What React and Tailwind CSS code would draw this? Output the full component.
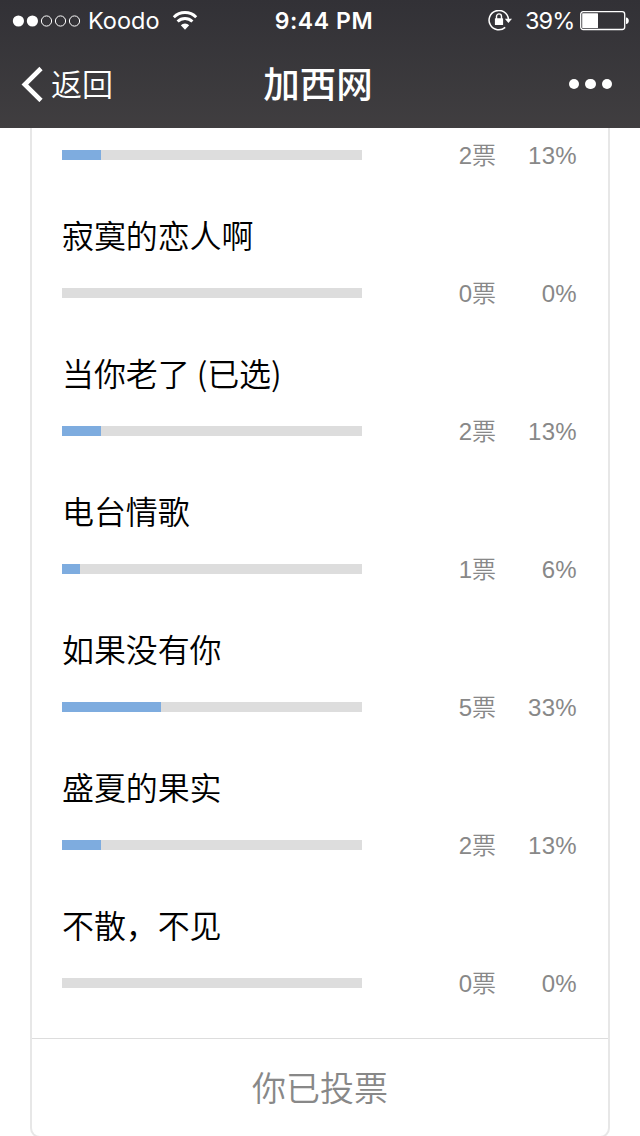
const options = [
  { votes: 2, percent: 13 },
  { title: "寂寞的恋人啊", votes: 0, percent: 0 },
  { title: "当你老了 (已选)", votes: 2, percent: 13 },
  { title: "电台情歌", votes: 1, percent: 6 },
  { title: "如果没有你", votes: 5, percent: 33 },
  { title: "盛夏的果实", votes: 2, percent: 13 },
  { title: "不散，不见", votes: 0, percent: 0 },
];

function SignalDots() {
  return (
    <svg width="70" height="14" viewBox="0 0 70 14" fill="none" stroke="white">
      <circle cx="6.4" cy="7" r="5.6" fill="white" stroke="none" />
      <circle cx="20.4" cy="7" r="5.6" fill="white" stroke="none" />
      <circle cx="34.5" cy="7" r="5.1" />
      <circle cx="48.5" cy="7" r="5.1" />
      <circle cx="62.5" cy="7" r="5.1" />
    </svg>
  );
}

function WifiIcon() {
  return (
    <svg width="26" height="20" viewBox="0 0 26 20" fill="none" stroke="white" strokeWidth="2.9">
      <path d="M1.8 6.2a15.800 15.800 0 0 1 22.400 0" />
      <path d="M5.6 10.500a10.500 10.500 0 0 1 14.800 0" />
      <path d="M8.8 14.200a5.800 5.800 0 0 1 8.4 0L13 18.800z" fill="white" stroke="none" />
    </svg>
  );
}

function RotationLockIcon() {
  return (
    <svg width="24" height="22" viewBox="0 0 24 22" fill="none" stroke="white">
      <path d="M20.400 9A9.700 9.700 0 1 0 17.200 17.400" strokeWidth="1.5" />
      <path d="M16.800 8.800h7.200l-3.600 4.200z" fill="white" stroke="none" />
      <rect x="6.900" y="8.200" width="8.200" height="6.800" rx="0.6" fill="white" stroke="none" />
      <path d="M8.500 9V6.400a2.500 2.500 0 0 1 5 0V9" strokeWidth="1.4" />
    </svg>
  );
}

function BatteryIcon() {
  return (
    <svg width="50" height="20" viewBox="0 0 50 20" fill="none">
      <rect x="0.7" y="0.7" width="44" height="17.800" rx="2.5" stroke="white" strokeWidth="1.3" />
      <rect x="2.200" y="2.200" width="15.800" height="14.800" rx="0.5" fill="white" />
      <path d="M46 6.500c1.800.2 2.800 1.400 2.800 3.300S47.800 12.900 46 13.100z" fill="white" />
    </svg>
  );
}

function StatusBar() {
  return (
    <div className="flex h-10 items-center pt-0.5 font-['Inter','Liberation_Sans',sans-serif] text-[23px] leading-[38px] whitespace-nowrap">
      <div className="flex w-[240px] items-center pl-3">
        <SignalDots />
        <span className="ml-1.5 w-[84px] text-[23.5px]">Koodo</span>
        <WifiIcon />
      </div>
      <div className="w-[168px] text-center font-semibold tracking-[0.6px]">9:44 PM</div>
      <div className="flex flex-1 items-center pl-20">
        <RotationLockIcon />
        <span className="ml-[13px] w-[55px] text-[23.5px] tracking-[-0.9px]">39%</span>
        <BatteryIcon />
      </div>
    </div>
  );
}

function NavBar() {
  return (
    <div className="flex h-[88px] items-center">
      <div className="flex w-[220px] items-center pl-5">
        <svg width="24" height="36" viewBox="0 0 24 36" fill="none" stroke="white" strokeWidth="4.600">
          <path d="M21 2.500L4.800 18.500L21 34.500" />
        </svg>
        <span className="ml-[7px] pt-1 text-[31px] font-[350]">返回</span>
      </div>
      <h1 className="w-[200px] pt-1 pr-1 text-center text-[36.5px] font-medium">加西网</h1>
      <div className="flex flex-1 justify-end gap-1.5 pr-7">
        <span className="size-[10.5px] rounded-full bg-white" />
        <span className="size-[10.5px] rounded-full bg-white" />
        <span className="size-[10.5px] rounded-full bg-white" />
      </div>
    </div>
  );
}

function PollOption({ title, votes, percent }) {
  return (
    <li>
      {title && (
        <div className="mt-10 mb-5 h-12 font-['Noto_Sans_CJK_SC',sans-serif] text-[32px] leading-[48px] font-[350] tracking-[-0.1px] text-black">
          {title}
        </div>
      )}
      <div className="flex h-[30px] items-center text-[24px] leading-[30px] font-[350] text-[#888]">
        <div className="h-2.5 w-[300px] bg-[#ddd]">
          <div className="h-full bg-[#7eacdf]" style={{ width: percent * 3 }} />
        </div>
        <span className="w-[134px] pt-0.5 text-right">{votes}票</span>
        <span className="w-[81px] pt-0.5 text-right tracking-[0.3px]">{percent}%</span>
      </div>
    </li>
  );
}

export default function App() {
  return (
    <div className="h-[1136px] w-[640px] overflow-hidden bg-white font-['Liberation_Sans','Noto_Sans_CJK_SC',sans-serif]">
      <header className="h-32 bg-linear-to-b from-[#323136] to-[#403e40] text-white">
        <StatusBar />
        <NavBar />
      </header>
      <main className="mx-[30px] h-[1010px] rounded-b-[10px] border-2 border-t-0 border-[#e7e7e7] bg-white">
        <ul className="px-[30px] pt-3 pb-10">
          {options.map((option, i) => (
            <PollOption key={i} {...option} />
          ))}
        </ul>
        <div className="h-[98px] border-t border-[#ddd] text-center text-[34px] leading-[100px] font-[350] text-[#888]">
          你已投票
        </div>
      </main>
    </div>
  );
}
